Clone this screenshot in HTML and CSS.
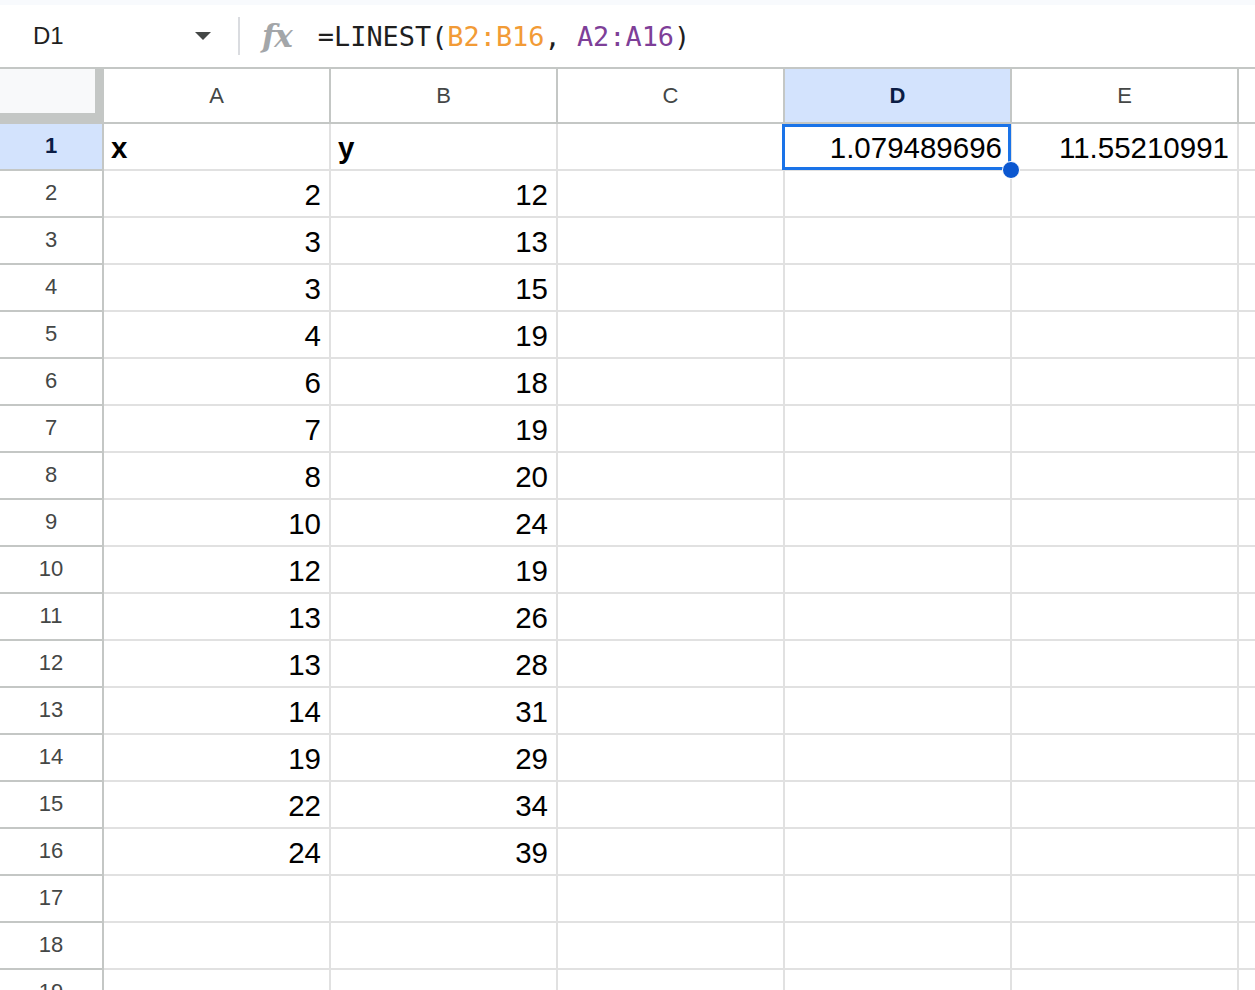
FILE: index.html
```html
<!DOCTYPE html>
<html>
<head>
<meta charset="utf-8">
<link rel="stylesheet" href="styles.css">
</head>
<body>
<div class="top-strip"></div>
<div class="formula-bar">
  <div class="name-box">
    <span class="name">D1</span>
    <svg class="caret" width="18" height="10" viewBox="0 0 18 10"><path d="M1 1 L17 1 L9 9 Z" fill="#444746"/></svg>
  </div>
  <div class="sep"></div>
  <span class="fx">fx</span>
  <div class="formula">=LINEST(<span class="ref-b">B2:B16</span>, <span class="ref-a">A2:A16</span>)</div>
</div>
<div class="sheet">
  <div class="corner"></div>
  <div class="hd">A</div><div class="hd">B</div><div class="hd">C</div><div class="hd hd-sel">D</div><div class="hd">E</div><div class="hd"></div>

  <div class="rh rh-sel">1</div><div class="c txt">x</div><div class="c txt">y</div><div class="c"></div><div class="c num sel">1.079489696<span class="sel-box"></span><span class="handle"></span></div><div class="c num">11.55210991</div><div class="c"></div>
  <div class="rh">2</div><div class="c num">2</div><div class="c num">12</div><div class="c"></div><div class="c"></div><div class="c"></div><div class="c"></div>
  <div class="rh">3</div><div class="c num">3</div><div class="c num">13</div><div class="c"></div><div class="c"></div><div class="c"></div><div class="c"></div>
  <div class="rh">4</div><div class="c num">3</div><div class="c num">15</div><div class="c"></div><div class="c"></div><div class="c"></div><div class="c"></div>
  <div class="rh">5</div><div class="c num">4</div><div class="c num">19</div><div class="c"></div><div class="c"></div><div class="c"></div><div class="c"></div>
  <div class="rh">6</div><div class="c num">6</div><div class="c num">18</div><div class="c"></div><div class="c"></div><div class="c"></div><div class="c"></div>
  <div class="rh">7</div><div class="c num">7</div><div class="c num">19</div><div class="c"></div><div class="c"></div><div class="c"></div><div class="c"></div>
  <div class="rh">8</div><div class="c num">8</div><div class="c num">20</div><div class="c"></div><div class="c"></div><div class="c"></div><div class="c"></div>
  <div class="rh">9</div><div class="c num">10</div><div class="c num">24</div><div class="c"></div><div class="c"></div><div class="c"></div><div class="c"></div>
  <div class="rh">10</div><div class="c num">12</div><div class="c num">19</div><div class="c"></div><div class="c"></div><div class="c"></div><div class="c"></div>
  <div class="rh">11</div><div class="c num">13</div><div class="c num">26</div><div class="c"></div><div class="c"></div><div class="c"></div><div class="c"></div>
  <div class="rh">12</div><div class="c num">13</div><div class="c num">28</div><div class="c"></div><div class="c"></div><div class="c"></div><div class="c"></div>
  <div class="rh">13</div><div class="c num">14</div><div class="c num">31</div><div class="c"></div><div class="c"></div><div class="c"></div><div class="c"></div>
  <div class="rh">14</div><div class="c num">19</div><div class="c num">29</div><div class="c"></div><div class="c"></div><div class="c"></div><div class="c"></div>
  <div class="rh">15</div><div class="c num">22</div><div class="c num">34</div><div class="c"></div><div class="c"></div><div class="c"></div><div class="c"></div>
  <div class="rh">16</div><div class="c num">24</div><div class="c num">39</div><div class="c"></div><div class="c"></div><div class="c"></div><div class="c"></div>
  <div class="rh">17</div><div class="c"></div><div class="c"></div><div class="c"></div><div class="c"></div><div class="c"></div><div class="c"></div>
  <div class="rh">18</div><div class="c"></div><div class="c"></div><div class="c"></div><div class="c"></div><div class="c"></div><div class="c"></div>
  <div class="rh">19</div><div class="c"></div><div class="c"></div><div class="c"></div><div class="c"></div><div class="c"></div><div class="c"></div>
</div>
</body>
</html>
```

FILE: styles.css
```css
* { box-sizing: border-box; }
html, body {
  margin: 0;
  padding: 0;
  background: #ffffff;
  width: 1255px;
  height: 990px;
  overflow: hidden;
  font-family: "Liberation Sans", Arial, sans-serif;
}
.top-strip {
  height: 5px;
  background: #f8fafd;
}
.formula-bar {
  height: 64px;
  display: flex;
  align-items: center;
  border-bottom: 2px solid #c4c7c5;
  background: #ffffff;
}
.name-box {
  width: 226px;
  display: flex;
  align-items: center;
  padding-left: 33px;
  padding-right: 14px;
}
.name {
  font-size: 24px;
  color: #1f1f1f;
  flex: 1;
}
.caret { display: block; }
.sep {
  width: 2px;
  height: 38px;
  background: #dadce0;
  margin-left: 12px;
}
.fx {
  font-family: "DejaVu Serif", "Liberation Serif", serif;
  font-style: italic;
  font-weight: bold;
  font-size: 31px;
  color: #a3a6a9;
  margin-left: 22px;
  letter-spacing: -1px;
}
.formula {
  font-family: "DejaVu Sans Mono", "Liberation Mono", monospace;
  font-size: 26.9px;
  color: #1f1f1f;
  margin-left: 26px;
  white-space: pre;
}
.ref-b { color: #f29b36; }
.ref-a { color: #7e3f98; }

.sheet {
  display: grid;
  grid-template-columns: 104px repeat(6, 227px);
  grid-template-rows: 55px repeat(19, 47px);
}
.corner {
  background: #f8f9fa;
  border-right: 9px solid #c4c7c5;
  border-bottom: 11px solid #c4c7c5;
}
.hd {
  display: flex;
  align-items: center;
  justify-content: center;
  font-size: 22px;
  color: #444746;
  border-right: 2px solid #c4c7c5;
  border-bottom: 2px solid #c4c7c5;
  background: #ffffff;
}
.hd-sel {
  background: #d3e3fd;
  color: #0b1d45;
  font-weight: bold;
}
.rh {
  display: flex;
  align-items: center;
  justify-content: center;
  font-size: 22px;
  color: #444746;
  border-right: 2px solid #c4c7c5;
  border-bottom: 2px solid #c4c7c5;
  background: #ffffff;
  padding-bottom: 2px;
}
.rh-sel {
  background: #d3e3fd;
  color: #0b1d45;
  font-weight: bold;
}
.c {
  position: relative;
  display: flex;
  align-items: flex-end;
  padding: 0 8px 5px 8px;
  font-size: 29.5px;
  line-height: 33px;
  color: #000000;
  border-right: 2px solid #e1e1e1;
  border-bottom: 2px solid #e1e1e1;
  white-space: nowrap;
}
.num { justify-content: flex-end; }
.txt { font-weight: bold; padding-left: 7px; }
.sel-box {
  position: absolute;
  left: -3px;
  top: 0;
  right: -1px;
  bottom: -1px;
  border: 3px solid #1a73e8;
  pointer-events: none;
}
.handle {
  position: absolute;
  right: -10px;
  bottom: -10px;
  width: 18px;
  height: 18px;
  border-radius: 50%;
  background: #0b57d0;
  border: 1px solid #ffffff;
  z-index: 2;
}
```
